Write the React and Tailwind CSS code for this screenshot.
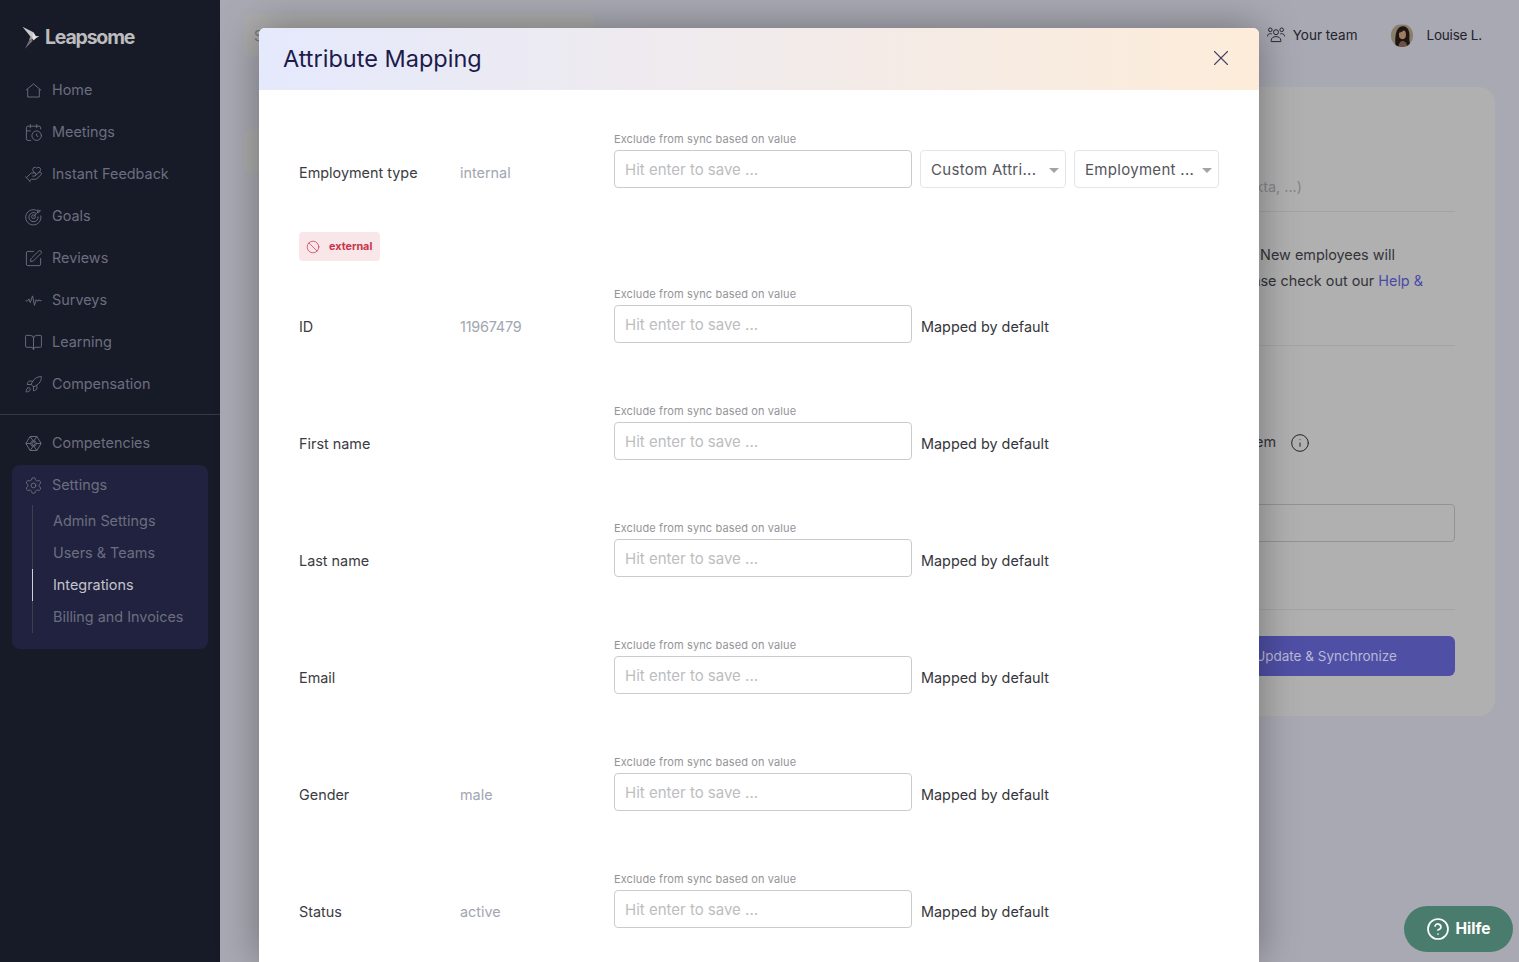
import React from "react";
import { CalendarClock, HandHeart, SquarePen, BookOpen, Rocket, Settings, X, Info, Ban, CircleHelp } from "lucide-react";

const HomeIcon = ({ className }) => (
  <svg viewBox="-1.5 -1.5 19 19" fill="none" stroke="currentColor" strokeWidth="0.95" className={className}>
    <path d="M0.4 7.8 8 1.4l7.6 6.4M2.2 6.6v7.9h11.6V6.6" />
  </svg>
);
const GoalIcon = ({ className }) => (
  <svg viewBox="-1.5 -1.5 19 19" fill="none" stroke="currentColor" strokeWidth="0.95" className={className}>
    <path d="M12.6 2.9A7.6 7.6 0 1 0 15.2 7" />
    <path d="M10.6 4.8A4.6 4.6 0 1 0 12.6 8" />
    <circle cx="8" cy="8.2" r="1.9" />
    <path d="M8 8.2 13 3M12.2 3.6 12.6 1.2l1 1 1.4.1-1.6 1.6z" />
  </svg>
);
const WaveIcon = ({ className }) => (
  <svg viewBox="-1.5 -1.5 19 19" fill="none" stroke="currentColor" strokeWidth="0.95" className={className}>
    <path d="M0 8.4h2l1.4-2 1.4 3.6L7 3.4l2 9.4 1.6-5.6 1 1.4h1l.8-1.4.8 1H16" />
  </svg>
);
const HexIcon = ({ className }) => (
  <svg viewBox="-1.5 -1.5 19 19" fill="none" stroke="currentColor" strokeWidth="0.95" className={className}>
    <path d="M4.6 1h6.8L15.6 8l-4.2 7H4.6L.4 8z" />
    <path d="M4.6 1 9.6 8l-5 7M11.4 1 6.4 8l5 7M.4 8h5M10.6 8h5" />
    <circle cx="8" cy="8" r="2.8" />
  </svg>
);
const TeamIcon = ({ className }) => (
  <svg viewBox="0 0 18 16" fill="none" stroke="#23232b" strokeWidth="0.95" className={className}>
    <circle cx="9" cy="5.2" r="2.5" />
    <path d="M4.2 14.6h9.6v-1.4c0-2.2-2.2-3.6-4.8-3.6s-4.8 1.4-4.8 3.6z" />
    <circle cx="3.3" cy="2.8" r="1.8" />
    <circle cx="14.7" cy="2.8" r="1.8" />
    <path d="M.5 9.4C.5 7.6 1.8 6.6 3.4 6.6c.5 0 1 .1 1.4.3M17.5 9.4c0-1.8-1.3-2.8-2.9-2.8-.5 0-1 .1-1.4.3" />
  </svg>
);
const Logo = () => (
  <svg viewBox="0 0 20 26" className="w-[19px] h-[25px]">
    <path d="M0.5 0.5 12 6.5l2 4-3 3z" fill="#c9c9c9" />
    <path d="M12 6.5l2.5 3.8 3.8.6-3 1.2-3.3 3-1-2z" fill="#e2e2e2" />
    <path d="M11 13.5l-.2 2.4-7.6 7.9L7.4 15z" fill="#6f7078" />
    <path d="M9 9.5 11 13.5 7.4 15z" fill="#9a9a9e" />
  </svg>
);
const Avatar = () => (
  <svg viewBox="0 0 24 24" className="w-[22px] h-[23px] rounded-full">
    <rect width="24" height="24" fill="#8a7f6c" />
    <path d="M5 24C4 14 5 3 12 2c7-1 9 7 8 13 0 4 1 7 1 9z" fill="#1d1612" />
    <ellipse cx="12.5" cy="11" rx="3.8" ry="5" fill="#a27b62" />
    <path d="M8 24c1-5 3-6 5-6s4 2 5 6z" fill="#6f5040" />
    <path d="M8.5 9c1-3 3-4 6-3.5-1 2-3 3-6 3.5z" fill="#1d1612" />
  </svg>
);

const nav = [
  ["Home", HomeIcon],
  ["Meetings", CalendarClock],
  ["Instant Feedback", HandHeart],
  ["Goals", GoalIcon],
  ["Reviews", SquarePen],
  ["Surveys", WaveIcon],
  ["Learning", BookOpen],
  ["Compensation", Rocket],
];
const sub = ["Admin Settings", "Users & Teams", "Integrations", "Billing and Invoices"];

const NavItem = ({ label, Icon }) => (
  <div className="h-[42px] pl-[24px] flex items-center gap-[9px] text-[14.4px] text-[#6c6e80]">
    <Icon className="w-[19px] h-[19px] shrink-0" strokeWidth={1.2} />
    <span>{label}</span>
  </div>
);

const Sidebar = () => (
  <aside className="w-[220px] shrink-0 h-full bg-[#171a27] flex flex-col">
    <div className="h-[69px] pl-[22px] pt-[7px] flex items-center gap-[4px]">
      <Logo />
      <span className="text-[19.5px] font-bold tracking-[-1.2px] text-[#bcbcbe]">Leapsome</span>
    </div>
    {nav.map(([l, I]) => <NavItem key={l} label={l} Icon={I} />)}
    <div className="h-px bg-[#363945] mt-[9px]" />
    <div className="mt-[7px]"><NavItem label="Competencies" Icon={HexIcon} /></div>
    <div className="mx-3 mt-px h-[184px] rounded-lg bg-[#20223f] pb-4 flex flex-col">
      <div className="h-10 pl-3 flex items-center gap-[9px] text-[14.4px] text-[#6c6e80]">
        <Settings className="w-[19px] h-[19px]" strokeWidth={1.2} />
        <span>Settings</span>
      </div>
      <div className="ml-5 border-l border-[#3c3f4d]">
        {sub.map((s) => {
          const on = s === "Integrations";
          return (
            <div key={s} className={"h-8 -ml-px pl-[20px] flex items-center text-[14.4px] border-l " + (on ? "border-[#d0d0d4] text-[#c4c4ca]" : "border-transparent text-[#6c6e80]")}>
              {s}
            </div>
          );
        })}
      </div>
    </div>
  </aside>
);

const Background = () => (
  <main className="flex-1 min-w-0 h-full bg-[#a9a9b3] flex flex-col pl-6 pr-6">
    <div className="h-[87px] flex items-start">
      <div className="w-[350px] h-[42px] mt-[14px] rounded-md bg-[#acacac] pl-[10px] flex items-center text-[14px] text-[#777]">S</div>
      <div className="ml-auto h-[70px] flex items-center text-[13.5px] text-[#23232b]">
        <TeamIcon className="w-[18px] h-4 mr-2" />
        <span>Your team</span>
        <span className="ml-[33px] mr-[14px]"><Avatar /></span>
        <span className="mr-[13px] tracking-[-0.2px]">Louise L.</span>
      </div>
    </div>
    <div className="flex items-start">
      <div className="w-[220px] h-[44px] mt-[42px] rounded-lg bg-[#acacac]" />
      <section className="ml-auto w-[700px] h-[629px] rounded-2xl bg-[#b0b0b0] flex flex-col pr-10 text-[14.4px] text-[#33333a]">
        <div className="h-[125px] flex items-end justify-end pb-[13px] border-b border-[#a4a4a4]">
          <span className="pr-[153px] text-[#85858a]">(Google, Okta, ...)</span>
        </div>
        <div className="h-[134px] pt-[30px] border-b border-[#a4a4a4] text-right leading-[26px]">
          <div className="pr-[60px]">New employees will</div>
          <div className="pr-8">please check out our <span className="text-[#4a4aa8]">Help &amp;</span></div>
        </div>
        <div className="h-[114px] flex items-end justify-end pb-[7px]">
          <span className="mr-[3px]">HR system</span>
          <Info className="w-5 h-5 ml-[11px] mr-[145px] text-[#23232b]" strokeWidth={1.2} />
        </div>
        <div className="mt-[44px] h-[38px] rounded border border-[#939393]" />
        <div className="mt-[67px] h-px bg-[#a4a4a4]" />
        <div className="mt-[26px] h-10 rounded-md bg-[#4f4fa6] flex items-center justify-end pr-[58px] text-[13.5px] text-[#b9b9d6]">
          Update &amp; Synchronize
        </div>
      </section>
    </div>
  </main>
);

const ExcludeInput = () => (
  <div className="w-[298px] shrink-0">
    <div className="h-4 mb-[3px] text-[11px] tracking-[0.12px] leading-4 text-[#949498]">Exclude from sync based on value</div>
    <input readOnly placeholder="Hit enter to save ..." className="w-full h-[38px] px-[10px] rounded border border-[#cbcbce] bg-white text-[15px] placeholder:text-[#bdbdc0] outline-none" />
  </div>
);

const Select = ({ text, w }) => (
  <div className={"h-[38px] rounded border border-[#e4e4ea] pl-[10px] pr-[6px] pt-[2px] flex items-center justify-between text-[15px] tracking-[0.3px] text-[#55555b] " + w}>
    <span className="whitespace-nowrap">{text}</span>
    <svg viewBox="0 0 10 5" className="w-[10px] h-[5px]"><path d="M0 0h10L5 5z" fill="#a3a3a8" /></svg>
  </div>
);

const Row = ({ label, value, selects, last, num }) => (
  <div className={"flex items-end " + (last ? "" : "mb-[60px]")}>
    <div className={"w-[161px] shrink-0 h-[38px] flex items-center text-[14.4px] text-[#3b3b42] " + (selects ? "pt-2" : "pt-[6px]")}>{label}</div>
    <div className={"w-[154px] shrink-0 h-[38px] flex items-center text-[14.4px] text-[#a2a6b2] " + (selects ? "pt-2" : "pt-[6px]") + (num ? " tracking-[-0.2px]" : "")}>{value}</div>
    <ExcludeInput />
    {selects ? (
      <div className="ml-2 flex gap-2">
        <Select text="Custom Attri..." w="w-[146px]" />
        <Select text="Employment ..." w="w-[145px]" />
      </div>
    ) : (
      <div className="ml-[9px] h-[38px] flex items-center pt-[6px] text-[14.4px] text-[#35353b]">Mapped by default</div>
    )}
  </div>
);

const Modal = () => (
  <div className="absolute left-[259px] top-[28px] w-[1000px] h-[934px] rounded-t-md bg-white shadow-[0_0_40px_rgba(0,0,0,0.35)] overflow-hidden">
    <header className="h-[62px] pl-6 pr-[25px] flex items-center justify-between bg-gradient-to-r from-[#e5e9fc] to-[#fdecd9]">
      <h1 className="text-[23.5px] font-normal text-[#1d1b4b]">Attribute Mapping</h1>
      <X className="w-[26px] h-[26px] -mt-[3px] text-[#45426a]" strokeWidth={1} />
    </header>
    <div className="pt-[41px] px-10">
      <Row label="Employment type" value="internal" selects />
      <div className="-mt-4 mb-[25px] w-[81px] h-[29px] rounded bg-[#f8e6e8] flex items-center pl-[7px] gap-[9px] text-[10.8px] font-bold text-[#c9344c]">
        <Ban className="w-[14px] h-[14px]" strokeWidth={1.2} />
        <span className="pt-[2px]">external</span>
      </div>
      <Row label="ID" value="11967479" num />
      <Row label="First name" />
      <Row label="Last name" />
      <Row label="Email" />
      <Row label="Gender" value="male" />
      <Row label="Status" value="active" last />
    </div>
  </div>
);

export default function App() {
  return (
    <div className="relative w-full h-screen overflow-hidden flex [font-family:Inter,sans-serif]">
      <Sidebar />
      <Background />
      <Modal />
      <div className="absolute left-[1404px] top-[906px] w-[109px] h-[46px] rounded-full bg-[#4a7c6d] flex items-center justify-center gap-[5px] text-[15.5px] font-bold text-white">
        <CircleHelp className="w-6 h-6" strokeWidth={1.7} />
        <span>Hilfe</span>
      </div>
    </div>
  );
}
